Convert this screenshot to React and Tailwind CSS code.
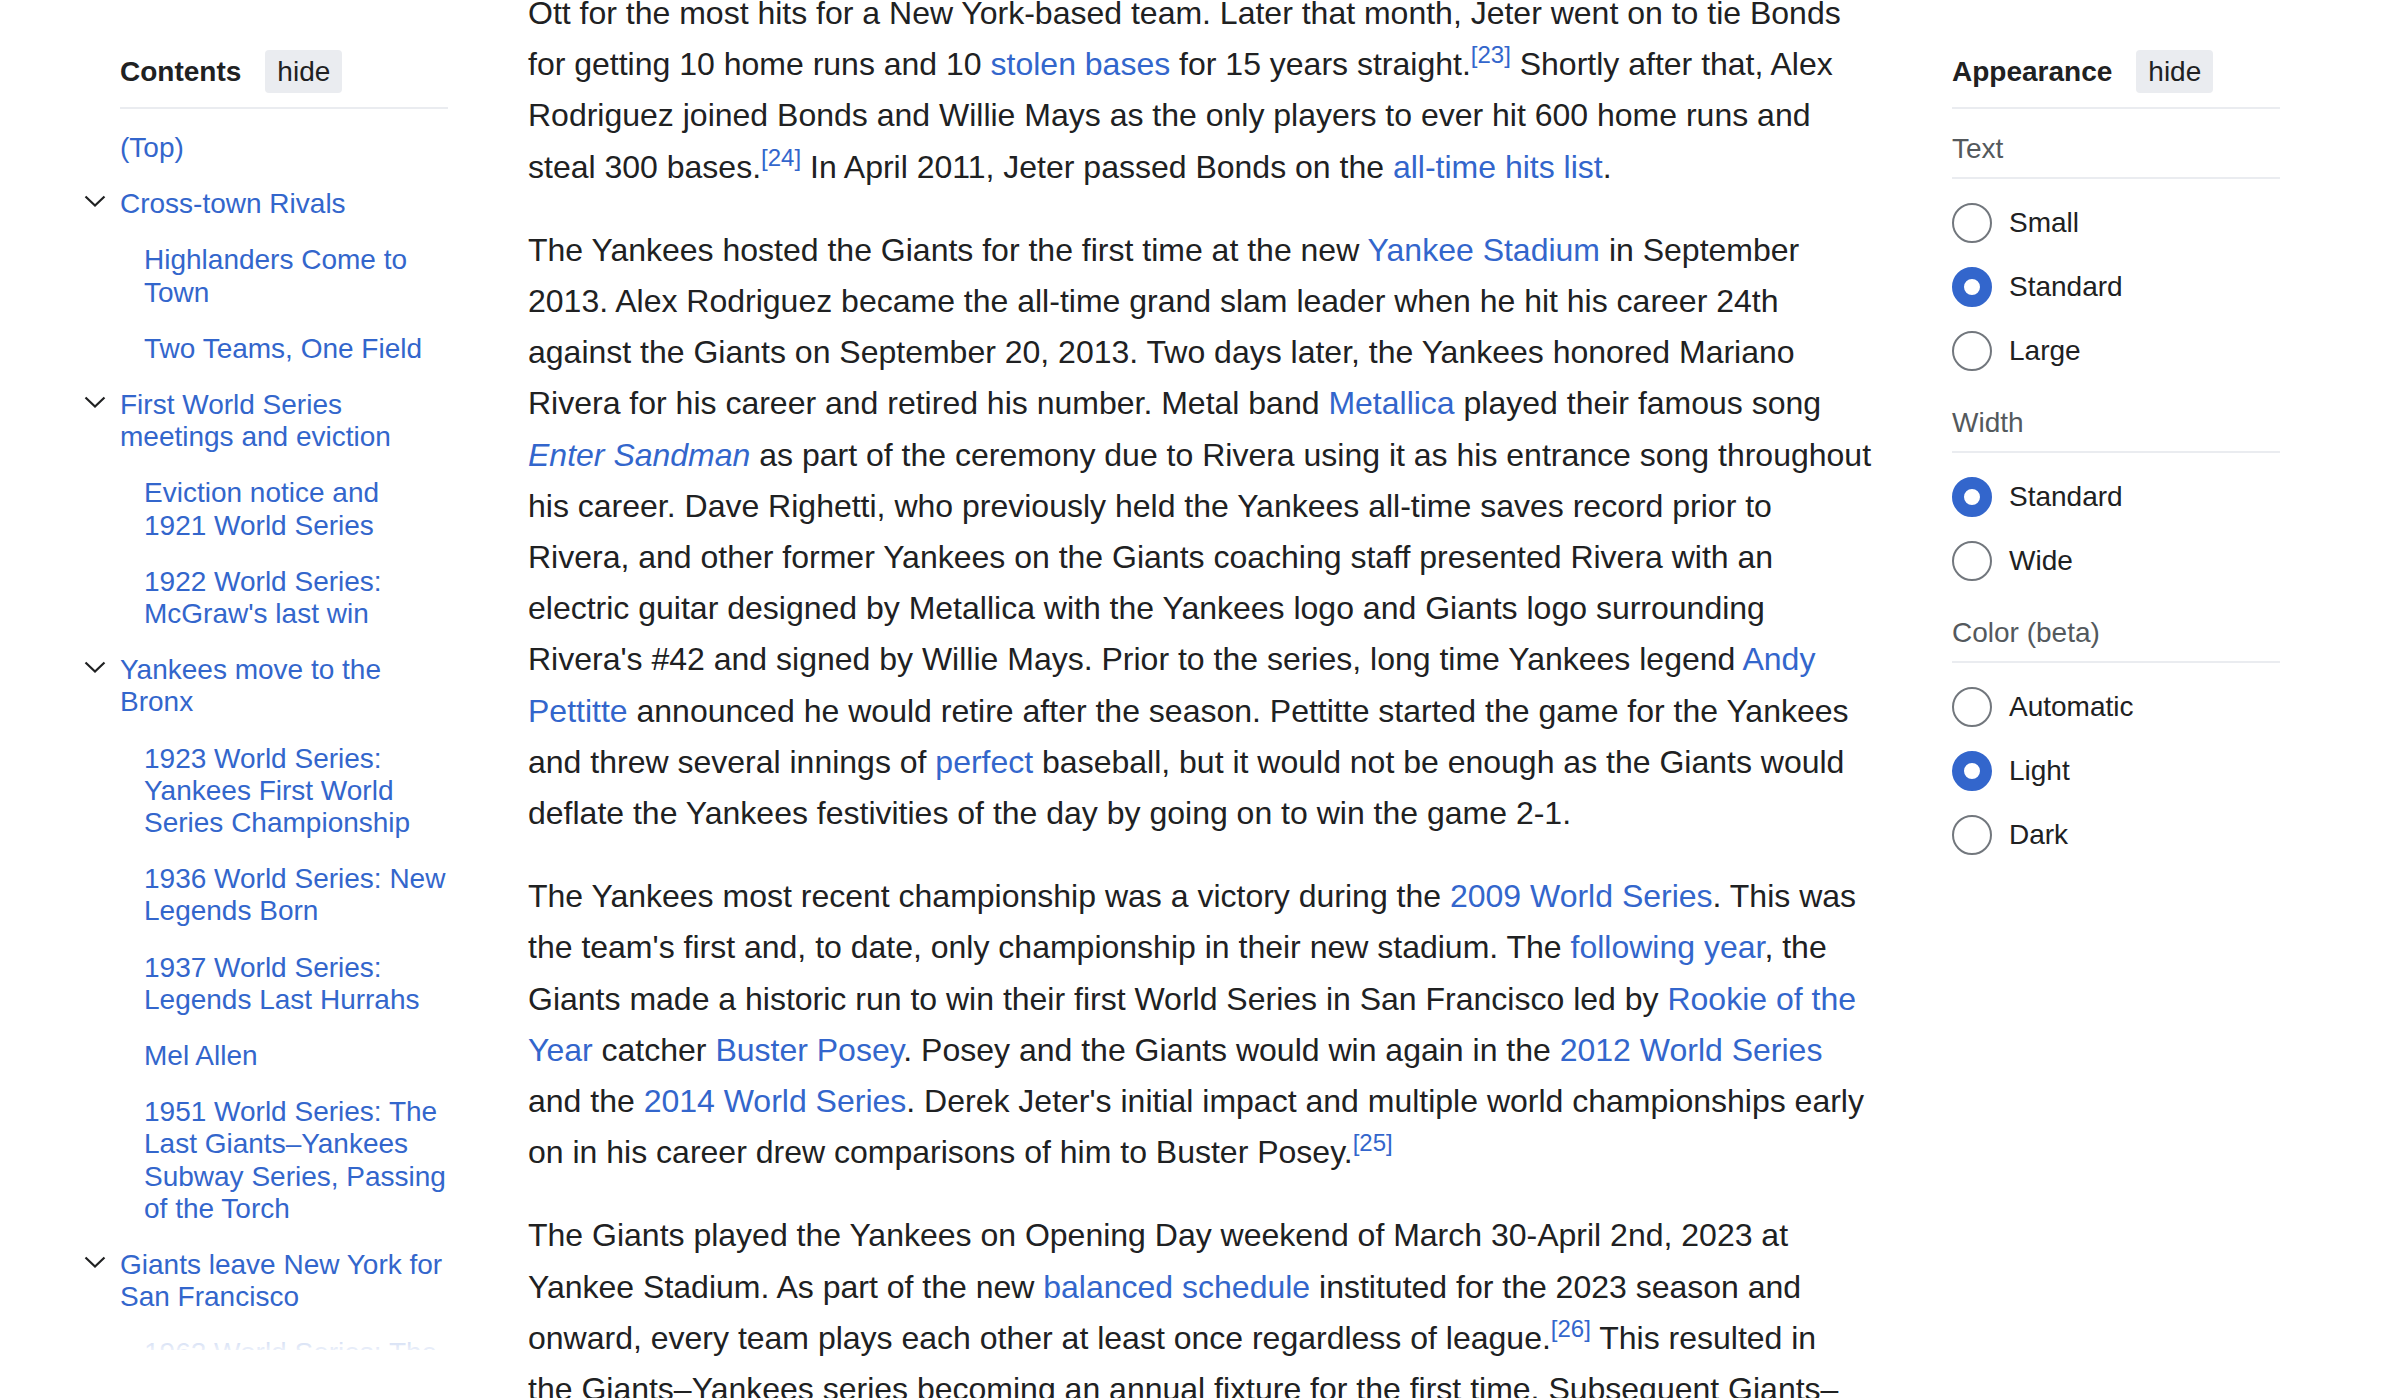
import React from "react";

const L = ({ children, i }) => (
  <a className={"text-[#3366cc] no-underline" + (i ? " italic" : "")}>{children}</a>
);

const Ref = ({ n }) => <sup className="text-[#3366cc]">[{n}]</sup>;

const toc = [
  { lines: ["(Top)"], lvl: 1 },
  { lines: ["Cross-town Rivals"], lvl: 1, toggle: true },
  { lines: ["Highlanders Come to", "Town"], lvl: 2 },
  { lines: ["Two Teams, One Field"], lvl: 2 },
  { lines: ["First World Series", "meetings and eviction"], lvl: 1, toggle: true },
  { lines: ["Eviction notice and", "1921 World Series"], lvl: 2 },
  { lines: ["1922 World Series:", "McGraw's last win"], lvl: 2 },
  { lines: ["Yankees move to the", "Bronx"], lvl: 1, toggle: true },
  { lines: ["1923 World Series:", "Yankees First World", "Series Championship"], lvl: 2 },
  { lines: ["1936 World Series: New", "Legends Born"], lvl: 2 },
  { lines: ["1937 World Series:", "Legends Last Hurrahs"], lvl: 2 },
  { lines: ["Mel Allen"], lvl: 2 },
  { lines: ["1951 World Series: The", "Last Giants–Yankees", "Subway Series, Passing", "of the Torch"], lvl: 2 },
  { lines: ["Giants leave New York for", "San Francisco"], lvl: 1, toggle: true },
  { lines: ["1962 World Series: The", "Giants Return"], lvl: 2 },
];

const Chevron = () => (
  <svg width="22" height="12" viewBox="0 0 22 12" fill="none">
    <path d="M1.5 1.5 L11 10.5 L20.5 1.5" stroke="#202122" strokeWidth="2.2" />
  </svg>
);

const PanelHeader = ({ title }) => (
  <div className="flex items-center h-[43px]">
    <span className="font-bold text-[28px] text-[#202122]">{title}</span>
    <span className="ml-[24px] h-[43px] w-[77px] flex items-center justify-center rounded-[4px] bg-[#eaecf0] text-[28px] text-[#202122]">
      hide
    </span>
  </div>
);

const Radio = ({ label, on }) => (
  <div className="h-[64px] flex items-center">
    <span
      className={
        "w-[40px] h-[40px] rounded-full bg-white shrink-0 " +
        (on ? "border-[12px] border-[#3366cc]" : "border-2 border-[#72777d]")
      }
    ></span>
    <span className="ml-[17px] text-[28px] text-[#202122]">{label}</span>
  </div>
);

const Section = ({ title, options }) => (
  <div className="pt-[24px]">
    <div className="leading-[32px] text-[28px] text-[#54595d] pb-[12px] border-b-2 border-[#eaecf0]">{title}</div>
    <div className="pt-[12px]">
      {options.map((o) => (
        <Radio key={o[0]} label={o[0]} on={o[1]} />
      ))}
    </div>
  </div>
);

export default function App() {
  return (
    <div
      className="w-[2400px] h-[1398px] overflow-hidden bg-white flex"
      style={{ fontFamily: '"Liberation Sans", Arial, sans-serif' }}
    >
      {/* Contents */}
      <aside className="ml-[120px] w-[328px] shrink-0 pt-[50px]">
        <div className="pb-[14px] border-b-2 border-[#eaecf0]">
          <PanelHeader title="Contents" />
        </div>
        <div className="relative -ml-[36px] pl-[36px] h-[1241px] overflow-hidden pt-[11px]">
          {toc.map((item, idx) => (
            <div
              key={idx}
              className={"flex py-[12px] " + (item.lvl === 2 ? "pl-[24px]" : "")}
            >
              {item.toggle && (
                <div className="-ml-[36px] w-[36px] h-[32px] flex items-center pb-[6px]">
                  <Chevron />
                </div>
              )}
              <div className="text-[28px] leading-[32.2px] text-[#3366cc] whitespace-nowrap">
                {item.lines.map((ln, j) => (
                  <div key={j}>{ln}</div>
                ))}
              </div>
            </div>
          ))}
          <div className="absolute left-0 right-0 bottom-0 h-[34px] bg-gradient-to-b from-white/50 to-white/90"></div>
        </div>
      </aside>

      {/* Article body */}
      <main className="ml-[80px] w-[1345px] shrink-0 -mt-[12px] text-[32px] leading-[51.2px] text-[#202122] whitespace-nowrap">
        <p className="mb-[32px]">
          Ott for the most hits for a New York-based team. Later that month, Jeter went on to tie Bonds<br />
          for getting 10 home runs and 10 <L>stolen bases</L> for 15 years straight.<Ref n="23" /> Shortly after that, Alex<br />
          Rodriguez joined Bonds and Willie Mays as the only players to ever hit 600 home runs and<br />
          steal 300 bases.<Ref n="24" /> In April 2011, Jeter passed Bonds on the <L>all-time hits list</L>.
        </p>
        <p className="mb-[32px]">
          The Yankees hosted the Giants for the first time at the new <L>Yankee Stadium</L> in September<br />
          2013. Alex Rodriguez became the all-time grand slam leader when he hit his career 24th<br />
          against the Giants on September 20, 2013. Two days later, the Yankees honored Mariano<br />
          Rivera for his career and retired his number. Metal band <L>Metallica</L> played their famous song<br />
          <L i>Enter Sandman</L> as part of the ceremony due to Rivera using it as his entrance song throughout<br />
          his career. Dave Righetti, who previously held the Yankees all-time saves record prior to<br />
          Rivera, and other former Yankees on the Giants coaching staff presented Rivera with an<br />
          electric guitar designed by Metallica with the Yankees logo and Giants logo surrounding<br />
          Rivera's #42 and signed by Willie Mays. Prior to the series, long time Yankees legend <L>Andy</L><br />
          <L>Pettitte</L> announced he would retire after the season. Pettitte started the game for the Yankees<br />
          and threw several innings of <L>perfect</L> baseball, but it would not be enough as the Giants would<br />
          deflate the Yankees festivities of the day by going on to win the game 2-1.
        </p>
        <p className="mb-[32px]">
          The Yankees most recent championship was a victory during the <L>2009 World Series</L>. This was<br />
          the team's first and, to date, only championship in their new stadium. The <L>following year</L>, the<br />
          Giants made a historic run to win their first World Series in San Francisco led by <L>Rookie of the</L><br />
          <L>Year</L> catcher <L>Buster Posey</L>. Posey and the Giants would win again in the <L>2012 World Series</L><br />
          and the <L>2014 World Series</L>. Derek Jeter's initial impact and multiple world championships early<br />
          on in his career drew comparisons of him to Buster Posey.<Ref n="25" />
        </p>
        <p className="mb-[32px]">
          The Giants played the Yankees on Opening Day weekend of March 30-April 2nd, 2023 at<br />
          Yankee Stadium. As part of the new <L>balanced schedule</L> instituted for the 2023 season and<br />
          onward, every team plays each other at least once regardless of league.<Ref n="26" /> This resulted in<br />
          the Giants–Yankees series becoming an annual fixture for the first time. Subsequent Giants–<br />
          Yankees series have been played in both ballparks.
        </p>
      </main>

      {/* Appearance */}
      <aside className="ml-[79px] w-[328px] shrink-0 pt-[50px]">
        <div className="pb-[14px] border-b-2 border-[#eaecf0]">
          <PanelHeader title="Appearance" />
        </div>
        <Section title="Text" options={[["Small", false], ["Standard", true], ["Large", false]]} />
        <Section title="Width" options={[["Standard", true], ["Wide", false]]} />
        <Section title="Color (beta)" options={[["Automatic", false], ["Light", true], ["Dark", false]]} />
      </aside>
    </div>
  );
}
